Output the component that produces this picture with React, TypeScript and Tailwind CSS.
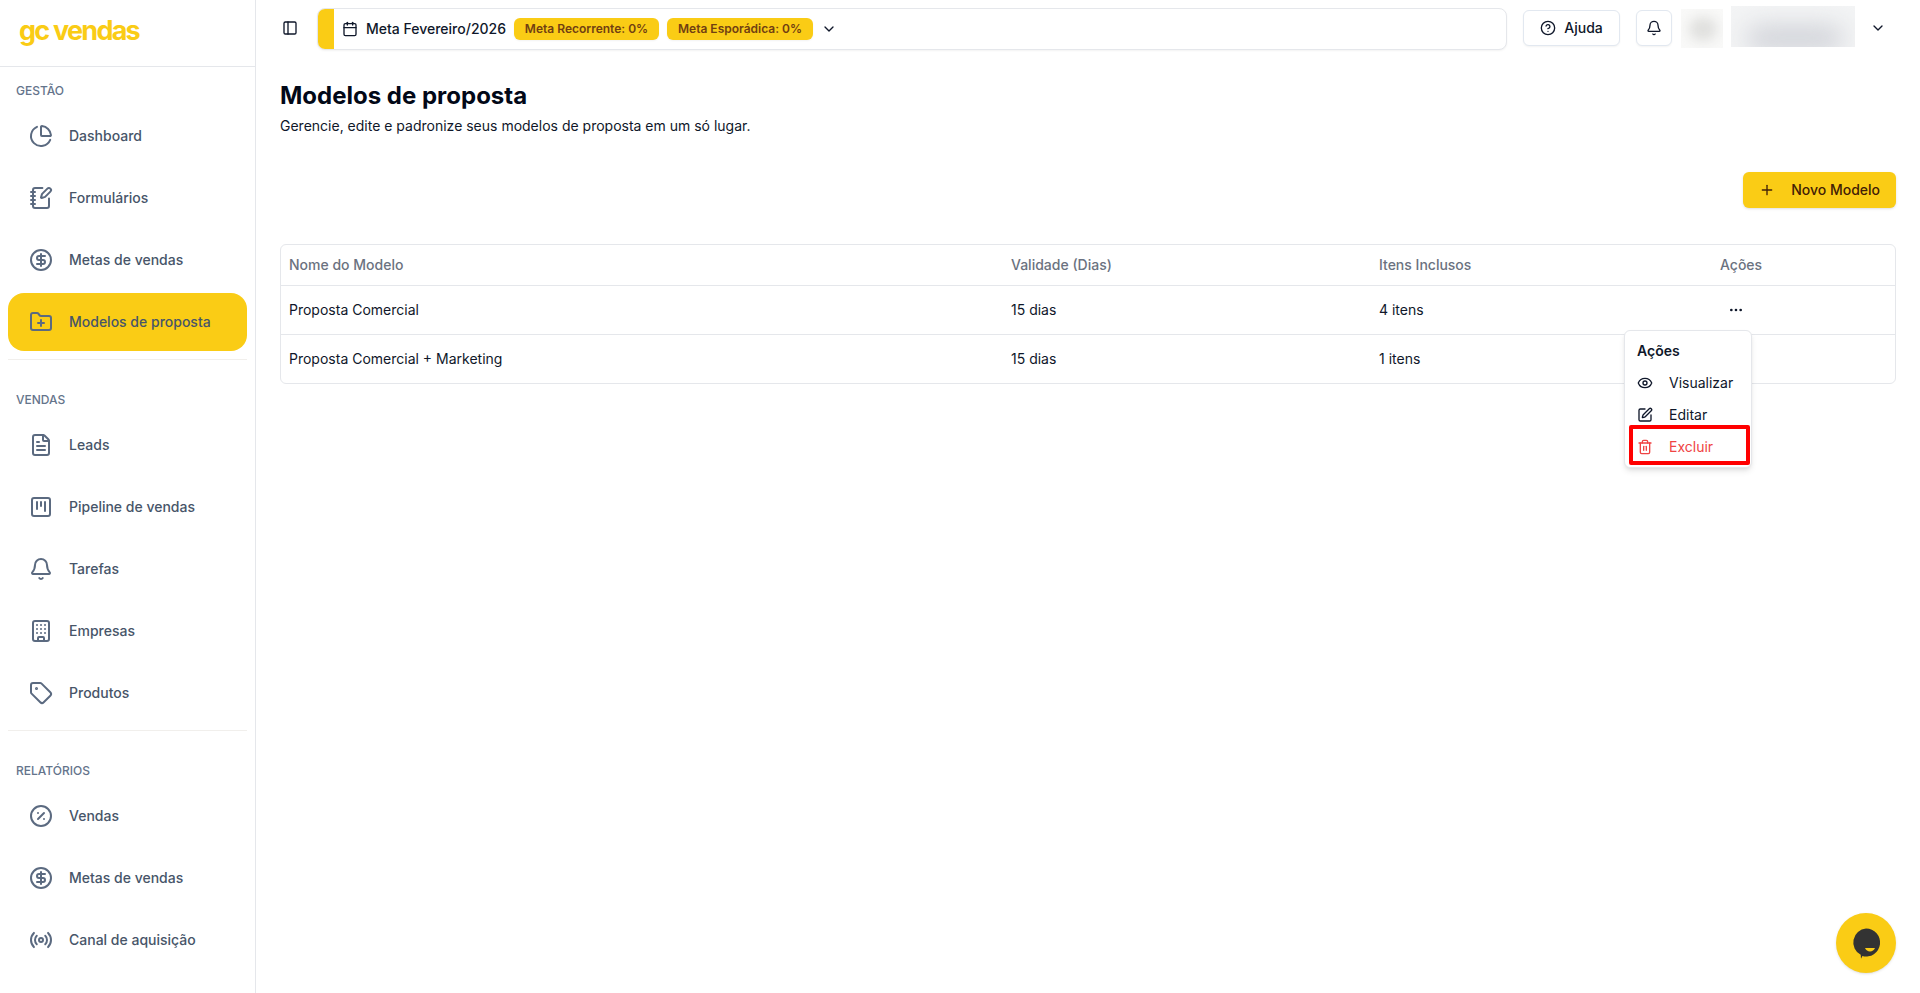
import {
  Bell,
  Building,
  Calendar,
  ChartPie,
  ChevronDown,
  CircleDollarSign,
  CircleHelp,
  CirclePercent,
  Ellipsis,
  Eye,
  FileText,
  FolderPlus,
  NotebookPen,
  PanelLeft,
  Plus,
  Radio,
  SquareKanban,
  SquarePen,
  Tag,
  Trash2,
} from 'lucide-react';
import type { LucideIcon } from 'lucide-react';

type NavItem = { label: string; icon: LucideIcon; active?: boolean };

const gestao: NavItem[] = [
  { label: 'Dashboard', icon: ChartPie },
  { label: 'Formulários', icon: NotebookPen },
  { label: 'Metas de vendas', icon: CircleDollarSign },
  { label: 'Modelos de proposta', icon: FolderPlus, active: true },
];

const vendas: NavItem[] = [
  { label: 'Leads', icon: FileText },
  { label: 'Pipeline de vendas', icon: SquareKanban },
  { label: 'Tarefas', icon: Bell },
  { label: 'Empresas', icon: Building },
  { label: 'Produtos', icon: Tag },
];

const relatorios: NavItem[] = [
  { label: 'Vendas', icon: CirclePercent },
  { label: 'Metas de vendas', icon: CircleDollarSign },
  { label: 'Canal de aquisição', icon: Radio },
];

function NavGroup({ title, items }: { title: string; items: NavItem[] }) {
  return (
    <div className="px-2">
      <div className="flex h-8 items-center px-2 text-xs font-medium text-[#64748b]">{title}</div>
      <ul className="flex flex-col gap-1">
        {items.map((item) => (
          <li
            key={item.label}
            className={`flex h-[58px] items-center gap-4 rounded-2xl pl-[21px] text-sm font-medium text-[#475569] ${
              item.active ? 'bg-[#facc15]' : ''
            }`}
          >
            <item.icon className="h-6 w-6 shrink-0 text-[#5b6a80]" strokeWidth={2} />
            <span>{item.label}</span>
          </li>
        ))}
      </ul>
    </div>
  );
}

function Sidebar() {
  return (
    <aside className="flex h-full w-64 shrink-0 flex-col border-r border-[#e5e7eb] bg-white">
      <div className="flex h-[67px] shrink-0 items-start border-b border-[#e5e7eb] pt-[17px] pl-[19px]">
        <span className="text-[27px] leading-[28px] font-bold tracking-[-0.065em] text-[#facc15]">gc vendas</span>
      </div>
      <div className="pt-2">
        <NavGroup title="GESTÃO" items={gestao} />
        <div className="mx-2 mt-2 border-t border-[#f1efec]" />
        <div className="pt-6">
          <NavGroup title="VENDAS" items={vendas} />
        </div>
        <div className="mx-2 mt-2 border-t border-[#f1efec]" />
        <div className="pt-6">
          <NavGroup title="RELATÓRIOS" items={relatorios} />
        </div>
      </div>
    </aside>
  );
}

function TopBar() {
  return (
    <header className="flex items-start pt-2 pr-[34px] pl-5">
      <button className="mt-[6px] mr-[13px] flex h-7 w-7 items-center justify-center text-[#0f172a]">
        <PanelLeft className="h-4 w-4" />
      </button>
      <div className="flex h-[42px] flex-1 items-center overflow-hidden rounded-lg border border-[#e5e7eb] bg-white shadow-xs">
        <div className="h-full w-4 shrink-0 bg-[#facc15]" />
        <Calendar className="ml-2 h-4 w-4 text-[#0f172a]" />
        <span className="ml-2 text-sm font-medium text-[#0f172a]">Meta Fevereiro/2026</span>
        <span className="ml-2 flex h-[22px] w-[145px] items-center justify-center rounded-md bg-[#facc15] text-xs font-semibold text-[#713f12] shadow-xs">
          Meta Recorrente: 0%
        </span>
        <span className="ml-2 flex h-[22px] w-[146px] items-center justify-center rounded-md bg-[#facc15] text-xs font-semibold text-[#713f12] shadow-xs">
          Meta Esporádica: 0%
        </span>
        <ChevronDown className="ml-2 h-4 w-4 text-[#0f172a]" />
      </div>
      <button className="mt-[2px] ml-4 flex h-9 w-[97px] items-center justify-center gap-2 rounded-md border border-[#e2e8f0] bg-white text-sm font-medium text-[#0f172a] shadow-xs">
        <CircleHelp className="h-4 w-4" />
        Ajuda
      </button>
      <button className="mt-[2px] ml-4 flex h-9 w-9 items-center justify-center rounded-md border border-[#e2e8f0] bg-white text-[#0f172a] shadow-xs">
        <Bell className="h-4 w-4" />
      </button>
      <div className="mt-px ml-[9px] h-[39px] w-[42px] overflow-hidden bg-[#f9f9f8]">
        <div className="mx-2 mt-2 h-6 w-7 rounded-full bg-[#e0e0de] blur-[6px]" />
      </div>
      <div className="-mt-[2px] ml-2 h-[41px] w-[124px] overflow-hidden bg-[#f3f4f5]">
        <div className="mt-5 ml-4 h-6 w-24 rounded-full bg-[#cfd1d7] blur-md" />
      </div>
      <ChevronDown className="mt-3 ml-[15px] h-4 w-4 text-[#0f172a]" />
    </header>
  );
}

function ActionsMenu() {
  return (
    <div className="absolute top-[86px] right-[144px] w-[128px] rounded-md border border-[#e5e7eb] bg-white p-1 text-sm text-[#0f172a] shadow-md">
      <div className="flex h-8 items-center pl-2 font-semibold">Ações</div>
      <div className="flex h-8 items-center gap-4 pl-2">
        <Eye className="h-4 w-4" />
        Visualizar
      </div>
      <div className="flex h-8 items-center gap-4 pl-2">
        <SquarePen className="h-4 w-4" />
        Editar
      </div>
      <div className="flex h-8 items-center gap-4 pl-2 text-[#ef4444]">
        <Trash2 className="h-4 w-4" />
        Excluir
      </div>
      {/* red annotation drawn over the screenshot */}
      <div className="absolute top-[94px] left-1 h-10 w-[121px] rounded-[2px] border-4 border-[#ff0000]" />
    </div>
  );
}

function ModelsTable() {
  const rows = [
    { name: 'Proposta Comercial', days: '15 dias', items: '4 itens', menu: true },
    { name: 'Proposta Comercial + Marketing', days: '15 dias', items: '1 itens', menu: false },
  ];

  return (
    <div className="relative mt-9">
      <div className="overflow-hidden rounded-md border border-[#e5e7eb]">
        <table className="w-full table-fixed text-left text-sm text-[#0f172a]">
          <thead>
            <tr className="h-10 border-b border-[#e5e7eb] text-[#6b7280]">
              <th className="w-[722px] px-2 font-medium">Nome do Modelo</th>
              <th className="w-[368px] px-2 font-medium">Validade (Dias)</th>
              <th className="w-[341px] px-2 font-medium">Itens Inclusos</th>
              <th className="px-2 font-medium">Ações</th>
            </tr>
          </thead>
          <tbody>
            {rows.map((row, i) => (
              <tr key={row.name} className={`h-[49px] ${i === 0 ? 'border-b border-[#e5e7eb]' : ''}`}>
                <td className="px-2">{row.name}</td>
                <td className="px-2">{row.days}</td>
                <td className="px-2">{row.items}</td>
                <td className="px-2">
                  {row.menu && (
                    <span className="flex h-8 w-8 items-center justify-center">
                      <Ellipsis className="h-4 w-4" />
                    </span>
                  )}
                </td>
              </tr>
            ))}
          </tbody>
        </table>
      </div>
      <ActionsMenu />
    </div>
  );
}

function ChatButton() {
  return (
    <button className="absolute right-6 bottom-5 h-[60px] w-[60px] rounded-full bg-[#facc15] shadow-sm">
      <svg viewBox="0 0 60 60" className="h-full w-full">
        <path d="M30 15.5a14 14 0 1 1-3.6 27.5L25 45.7l-.3-3.9A14 14 0 0 1 30 15.5z" fill="#333333" />
        <path d="M29 35h10q-1.5 3.4-5 3.4t-5-3.4z" fill="#facc15" />
      </svg>
    </button>
  );
}

export default function App() {
  return (
    <div className="relative flex h-[993px] w-full overflow-hidden bg-white font-['Inter',sans-serif]">
      <Sidebar />
      <main className="flex min-w-0 flex-1 flex-col">
        <TopBar />
        <div className="px-6 pt-[30px]">
          <h1 className="text-2xl font-bold text-[#020817]">Modelos de proposta</h1>
          <p className="mt-1 text-sm text-[#0f172a]">Gerencie, edite e padronize seus modelos de proposta em um só lugar.</p>
          <div className="mt-9 flex justify-end">
            <button className="flex h-9 items-center gap-4 rounded-md bg-[#facc15] px-4 text-sm font-medium text-[#422006] shadow-sm">
              <Plus className="h-4 w-4" />
              Novo Modelo
            </button>
          </div>
          <ModelsTable />
        </div>
      </main>
      <ChatButton />
    </div>
  );
}
